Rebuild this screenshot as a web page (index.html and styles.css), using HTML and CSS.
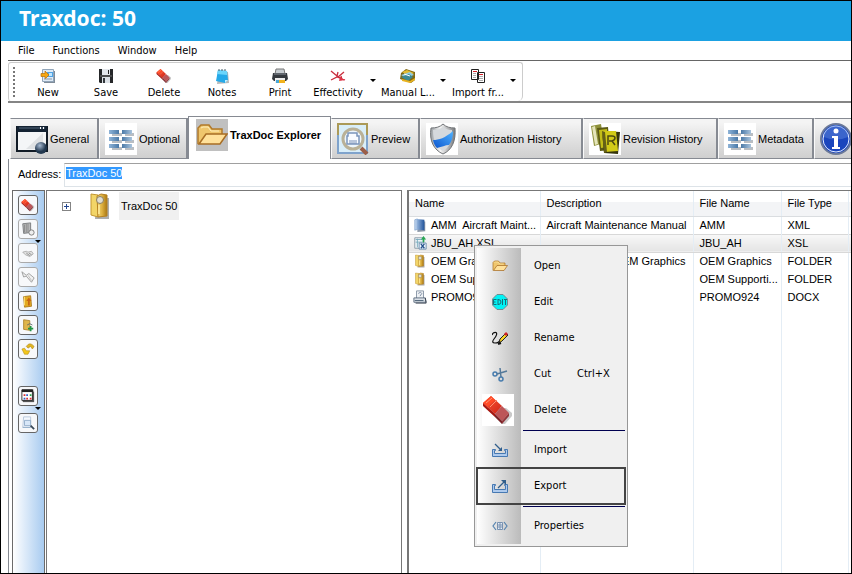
FILE: index.html
```html
<!DOCTYPE html>
<html lang="en">
<head>
<meta charset="utf-8">
<title>Traxdoc: 50</title>
<link rel="stylesheet" href="styles.css">
</head>
<body>
<svg class="defs" aria-hidden="true">
  <defs>
    <linearGradient id="g-steel" x1="0" x2="1"><stop offset="0" stop-color="#8fb4d8"/><stop offset=".5" stop-color="#3e6f9f"/><stop offset="1" stop-color="#a9c4dd"/></linearGradient>
    <linearGradient id="g-gold" x1="0" x2="1"><stop offset="0" stop-color="#f3dc80"/><stop offset=".5" stop-color="#dfb140"/><stop offset="1" stop-color="#a97812"/></linearGradient>
    <linearGradient id="g-ribbon" x1="0" y1="1" x2="1" y2="0"><stop offset="0" stop-color="#0b56cf"/><stop offset="1" stop-color="#4fb2ff"/></linearGradient>
    <linearGradient id="g-shield" x1="0" x2="1"><stop offset="0" stop-color="#9a9fa3"/><stop offset=".4" stop-color="#f4f4f4"/><stop offset="1" stop-color="#77797c"/></linearGradient>
    <linearGradient id="g-red" x1="0" y1="0" x2="1" y2="1"><stop offset="0" stop-color="#ff5a35"/><stop offset="1" stop-color="#cf2418"/></linearGradient>
    <linearGradient id="g-book" x1="0" x2="1"><stop offset="0" stop-color="#9ab9e0"/><stop offset="1" stop-color="#21549b"/></linearGradient>
    <radialGradient id="g-ball" cx=".4" cy=".3"><stop offset="0" stop-color="#a8bbd2"/><stop offset="1" stop-color="#22384f"/></radialGradient>
  </defs>
  <symbol id="i-eraser" viewBox="0 0 32 32">
    <path d="M4 14l16 16h3l7-8v-3l-6-5z" fill="#888" opacity=".45"/>
    <path d="M1 9l8-7 11 10-7 8z" fill="url(#g-red)"/><path d="M1 9l8-7 4 4-8 7z" fill="#ff4a26"/>
    <path d="M1 9v3l12 11v-3z" fill="#a81710"/><path d="M13 20l7-8 7 7-7 8z" fill="#bd5658"/><path d="M13 20v3l7 7v-3z" fill="#7d2327"/><path d="M20 27l7-8v3l-7 8z" fill="#92363a"/>
    <path d="M4 9l6-5M8 13l7-7" stroke="#ff9374" fill="none"/>
  </symbol>
  <symbol id="i-new" viewBox="0 0 16 16"><path d="M4 3h11v12H4z" fill="#7f8c99"/><path d="M2.500 1.500h11v12h-11z" fill="#dfeaf5" stroke="#91a5b9"/><path d="M7 4h6v5H7z" fill="#4fa4e5"/><path d="M9 5h3v3H9z" fill="#bfe5ff"/><path d="M1 5.500h4V3l4 4-4 4V8.500H1z" fill="#f6a712" stroke="#b86f08" stroke-width=".7"/><path d="M4 11h8" stroke="#8799aa"/></symbol>
  <symbol id="i-save" viewBox="0 0 16 16"><path d="M1 1h14v14H2l-1-1z" fill="#252729"/><path d="M4 1h8v6H4z" fill="#e4e8ed"/><path d="M10 2h1v4h-1z" fill="#222"/><path d="M4 9h8v6H4z" fill="#dce1e6"/><path d="M5 10h2v5H5z" fill="#33383d"/><path d="M2 8h12" stroke="#777"/></symbol>
  <symbol id="i-note" viewBox="0 0 16 16"><path d="M5 3l9 1 1 11-12 1z" fill="#888" opacity=".6"/><path d="M4 2l9 1 1 9-3 3-9-2z" fill="#25a9e8"/><path d="M4 2l9 1v4L3 6z" fill="#6bd5fb"/><path d="M11 15v-3h3z" fill="#c2efff"/><path d="M5 1v2M8 1v2M11 1v2" stroke="#465c68"/></symbol>
  <symbol id="i-print" viewBox="0 0 16 16"><path d="M4 1h8l1 5H3z" fill="#c7ccd1" stroke="#777"/><path d="M1 5h14l1 6-2 2H2l-2-2z" fill="#34383e"/><path d="M2 6h12" stroke="#8b929b"/><path d="M3 10h10v5H3z" fill="#eee"/><path d="M4 12h3v3H4z" fill="#46a7da"/><path d="M7 12h6v3H7z" fill="#f2b31d"/></symbol>
  <symbol id="i-effect" viewBox="0 0 16 16"><g fill="none" stroke="#c92d3d" stroke-width="1.300"><path d="M1 3l6 5 7 4M7 8l1-4M8 9l6-5M1 12l6-3 8 3M11 8l1 4"/></g><path d="M10 9l5 3-6 1z" fill="#df3547"/></symbol>
  <symbol id="i-manual" viewBox="0 0 16 16"><path d="M1 5l5-4 9 3v8l-4 3-11-4z" fill="#806813"/><path d="M2 4l5-2 7 3-5 3z" fill="#e4bd32"/><path d="M1 7l9-3 4 3-8 3z" fill="#91cae0"/><path d="M1 9l8-3 4 3-5 4z" fill="#3d8a94"/><path d="M2 11l8 2 5-3v2l-5 3-8-2z" fill="#e8b320"/><path d="M4 6l6 2" stroke="#fff"/></symbol>
  <symbol id="i-import-from" viewBox="0 0 16 16"><path d="M1.500 1.500h7v10h-7zM7.500 4.500h7v10h-7z" fill="#fff" stroke="#202020"/><path d="M3 3.500h4M9 6.500h4" stroke="#d51e26"/><path d="M3 5.500h3M3 7.500h3M3 9.500h3M9 8.500h4M9 10.500h4M9 12.500h4" stroke="#aaa"/></symbol>
  <symbol id="i-window" viewBox="0 0 32 32"><path d="M1 4h30v24H1z" fill="#f4f6f7" stroke="#111b26" stroke-width="2"/><path d="M1 3h30v6H1z" fill="#142333"/><path d="M3 5h26" stroke="#53667a"/><path d="M24 5h1m2 0h1" stroke="#fff" stroke-width="2"/><path d="M10 26L27 10v16z" fill="#dfe2e4"/><circle cx="25" cy="25" r="6" fill="url(#g-ball)"/></symbol>
  <symbol id="i-grid" viewBox="0 0 32 32"><path d="M0 0h32v32H0z" fill="#fff"/><path d="M7 10h10v3H7zm13 0h9v3h-9zM7 17h10v3H7zm13 0h9v3h-9zM7 24h10v3H7zm13 0h9v3h-9z" fill="#b9bec3"/><path d="M4 7h10v4H4zm13 0h10v4H17zM4 14h10v4H4zm13 0h10v4H17zM4 21h10v4H4zm13 0h10v4H17z" fill="url(#g-steel)"/></symbol>
  <symbol id="i-folder" viewBox="0 0 32 32"><path d="M2 25V9l3-3h8l3 4h10v6" fill="#efc66d" stroke="#b1792a" stroke-width="1.500"/><path d="M3 25l7-10h21l-7 10z" fill="#ffe19b" stroke="#a86e25" stroke-width="1.500"/><path d="M5 9l2-1h5l3 4h8" fill="none" stroke="#fff0bc"/></symbol>
  <symbol id="i-preview" viewBox="0 0 32 32"><path d="M1 1h29v29H1z" fill="#d9eef9"/><path d="M1 12V1h29v11" fill="none" stroke="#ab9a58" stroke-width="2"/><path d="M1 12v18h29V12" fill="none" stroke="#7fa3cc" stroke-width="2"/><path d="M24 25l6 6" stroke="#9b5e48" stroke-width="4"/><circle cx="16" cy="16" r="10" fill="#edf6fc" stroke="#b9b197" stroke-width="3"/><path d="M11 13v-3h9v3h2v8H10v-8z" fill="#f9fcff" stroke="#7b95bb" stroke-width="1.500"/><path d="M12 18h8M12 20h8" stroke="#7690b8"/></symbol>
  <symbol id="i-shield" viewBox="0 0 32 32"><path d="M0 0h32v32H0z" fill="#fff"/><path d="M17 1c3 3 7 4 12 4 1 13-3 22-12 26C8 27 3 18 5 5c5 0 9-1 12-4z" fill="url(#g-shield)" stroke="#717477"/><path d="M17 4c3 2 5 3 9 3 0 11-3 18-9 21C11 25 7 18 7 7c4 0 7-1 10-3z" fill="#d5d9dd"/><path d="M7 17c6 0 12-2 20-9 0 6-1 10-4 14-4 0-7 2-12 3-2-2-3-4-4-8z" fill="url(#g-ribbon)"/></symbol>
  <symbol id="i-revision" viewBox="0 0 32 32"><path d="M0 0h32v32H0z" fill="#fff"/><path d="M2 3l10-2 3 19-10 3z" fill="#8e913a"/><path d="M3 4l3-1 3 18-3 1z" fill="#e5e5bb"/><path d="M8 5l11-1 2 23-10 1z" fill="#5b5915"/><path d="M10 7l8-1v18l-6 1z" fill="#c3bd18"/><path d="M13 8l2 22 14 1 2-22z" fill="#35340c"/><path d="M13 8h14l2 20-13 1z" fill="#d2ca18"/><path d="M13 8l3 1 2 20-3 1z" fill="#666117"/><path d="M19 22V13h4q3 0 3 2t-3 3h-3m3 0l3 4" stroke="#4d4911" stroke-width="1.500" fill="none"/></symbol>
  <symbol id="i-info" viewBox="0 0 32 32"><circle cx="16" cy="16" r="15" fill="#1a45bd" stroke="#6a7898" stroke-width="2"/><circle cx="16" cy="16" r="13" fill="none" stroke="#e5edff"/><path d="M4 14a12 12 0 0 1 24 0q-12 5-24 0" fill="#5b85dc" opacity=".5"/><circle cx="16" cy="8" r="2.500" fill="#fff"/><path d="M12 13h6v11h2v2h-8v-2h2v-9h-2z" fill="#fff"/></symbol>
  <symbol id="i-binder" viewBox="0 0 24 28"><path d="M8 6h13v21H7z" fill="#777" opacity=".6"/><path d="M3 2l7 1v22l-7-2z" fill="#f2d568" stroke="#c39733"/><path d="M9 4l4-2 6 1v21l-9 1z" fill="url(#g-gold)" stroke="#b68120"/><circle cx="12" cy="8" r="3.500" fill="#e1ddd0" stroke="#8b8061"/><path d="M11 13v9" stroke="#f9e28e" stroke-width="2"/></symbol>
  <symbol id="i-book" viewBox="0 0 16 16"><path d="M5 3l9 1v11l-9 1z" fill="#8c98a8"/><path d="M2 2l3-1v12l-3 1z" fill="#bcd1ec" stroke="#628bbf" stroke-width=".6"/><path d="M4 1l9 1v12l-9-1z" fill="url(#g-book)"/></symbol>
  <symbol id="i-xsl" viewBox="0 0 16 16"><path d="M2 2h10v12H2z" fill="#edf3f6" stroke="#8798a4"/><path d="M3 4h8M3 7h8M5 3v10" stroke="#75a9bc"/><path d="M7 8h8v7H7z" fill="#eff8ff" stroke="#6286a8"/><path d="M9 9l4 5m0-5l-4 5" stroke="#26518a" stroke-width="1.500"/><path d="M12 0l3 4h-2v3h-2V4H9z" fill="#28a653"/></symbol>
  <symbol id="i-doc" viewBox="0 0 16 16"><path d="M4 1h8v10H4z" fill="#eef1f4" stroke="#8290a0"/><path d="M6 4q3-3 4 0L8 7" fill="none" stroke="#73839b"/><path d="M1 9h13l1 5H1z" fill="#d9dfe6" stroke="#58697b"/><path d="M2 12h10" stroke="#465b70"/><path d="M14 9l1 6H3" fill="none" stroke="#343d49"/></symbol>
  <symbol id="i-gray-book" viewBox="0 0 16 16"><path d="M2 2l9-1v11l-8 1z" fill="#b9babb" stroke="#747678"/><path d="M4 3v9M6 2v10M8 2v10" stroke="#888"/><circle cx="12" cy="12" r="3" fill="#eee" stroke="#777"/></symbol>
  <symbol id="i-gray-hand" viewBox="0 0 16 16"><path d="M2 7l4-1 2 1 4-1 2 3-4 3-5-2z" fill="#e2e2e2" stroke="#aaa"/><path d="M6 8l4 3M9 8l3 2" stroke="#888"/></symbol>
  <symbol id="i-gray-tag" viewBox="0 0 16 16"><path d="M1 2l2 6 3-1 6 7 3-5-6-5-3 2z" fill="#f0f0f0" stroke="#999"/><path d="M8 6l4 6" stroke="#bbb"/></symbol>
  <symbol id="i-arrow-binder" viewBox="0 0 16 16"><path d="M3 3l8-1 1 12-8 1z" fill="#e3aa22" stroke="#aa791b"/><path d="M4 3v10" stroke="#ffe57e"/><path d="M8 13V8H6l3-4 3 4h-2v5z" fill="#c76613"/></symbol>
  <symbol id="i-add-binder" viewBox="0 0 16 16"><path d="M3 2l7 1v11l-7-1z" fill="#dfb54a" stroke="#af852b"/><path d="M11 9v6m-3-3h6" stroke="#239445" stroke-width="2"/><path d="M7 8q3-3 6 0" fill="none" stroke="#5a6670"/></symbol>
  <symbol id="i-refresh" viewBox="0 0 16 16"><path d="M6 5q4-6 9 0l-2 3-2-3-3 2z" fill="#e0b623" stroke="#aa7e11" stroke-width=".6"/><path d="M1 8l3-1 2 3h4l-2 4H4z" fill="#f3c71c" stroke="#af8510" stroke-width=".6"/></symbol>
  <symbol id="i-calendar" viewBox="0 0 16 16"><path d="M2 3h13v12H2z" fill="#555"/><path d="M1 1h12v12H1z" fill="#fff" stroke="#222"/><path d="M1 2h13" stroke="#222" stroke-width="3"/><path d="M3 6h2v2H3zm3 4h2v2H6zm4 0h2v2h-2z" fill="#e02b31"/><path d="M6 6h2v2H6zm-3 4h2v2H3z" fill="#315dcc"/><path d="M10 6h2v2h-2z" fill="#29a34b"/></symbol>
  <symbol id="i-find" viewBox="0 0 16 16"><path d="M3 1h8v12H2z" fill="#f4f8fd" stroke="#b4c5da"/><path d="M4 5h7v6H4z" fill="#d8e7f8" stroke="#8ea9c6"/><path d="M2 13h9" stroke="#8ea9c6"/><path d="M11 11l4 4" stroke="#384858" stroke-width="2"/></symbol>
  <symbol id="i-edit" viewBox="0 0 16 16"><path d="M5 .5h6L15.500 5v6L11 15.500H5L.5 11V5z" fill="#00f3f5" stroke="#708b91"/><path d="M4.500 5.500h-3v5h3M1.500 8h2M6 5v6M6 5.500q3 0 3 2.500t-3 2.500M10.500 5v6M12 5.500h3M13.500 5v6" fill="none" stroke="#177079"/></symbol>
  <symbol id="i-rename" viewBox="0 0 16 16"><path d="M0 5q1-3 4-2.500Q6 4 2 9q-3 4 1 4 4 0 5-3" fill="none" stroke="#111" stroke-width="1.200"/><path d="M7 13l1-4 6-6 2 2-6 6z" fill="#f8d326" stroke="#222"/><path d="M13 3l2 2" stroke="#d02027" stroke-width="3"/><path d="M6 14l3-1" stroke="#111" stroke-width="2"/></symbol>
  <symbol id="i-cut" viewBox="0 0 16 16"><circle cx="3" cy="8" r="2" fill="none" stroke="#477cad" stroke-width="1.500"/><circle cx="9" cy="13" r="2" fill="none" stroke="#477cad" stroke-width="1.500"/><path d="M5 8l10-3M9 11l-1-9" stroke="#54799a" stroke-width="1.500"/></symbol>
  <symbol id="i-import" viewBox="0 0 16 16"><path d="M.5 7.500h3v1h-1v3h11v-3h-1v-1h3v7H.5z" fill="#aecaed" stroke="#4779b2"/><path d="M3 2l6 6" stroke="#315e8b" stroke-width="1.200"/><path d="M10 5v4H6z" fill="#315e8b"/></symbol>
  <symbol id="i-export" viewBox="0 0 16 16"><path d="M.5 6.500h3v1h-1v4h11v-4h-1v-1h3v8H.5z" fill="#aecaed" stroke="#4779b2"/><path d="M6 10l7-7" stroke="#315e8b" stroke-width="1.200"/><path d="M9 2h5v5z" fill="#315e8b"/></symbol>
  <symbol id="i-props" viewBox="0 0 16 16"><path d="M4 4L1 8l3 4M12 4l3 4-3 4" fill="none" stroke="#5684b0" stroke-width="1.200"/><path d="M5.500 4.500h5v7h-5zM5 7h6M5 9h6M8 5v6" fill="#e4edf7" stroke="#7891b0"/></symbol>
</svg>

<div class="app">
  <header class="title-bar"><h1>Traxdoc: 50</h1></header>
  <nav class="menu-bar" aria-label="Main">
    <button>File</button><button>Functions</button><button>Window</button><button>Help</button>
  </nav>
  <div class="toolbar-row">
    <div class="toolbar" role="toolbar">
      <span class="grip"></span>
      <button class="tool"><svg><use href="#i-new"/></svg>New</button>
      <button class="tool"><svg><use href="#i-save"/></svg>Save</button>
      <button class="tool"><svg><use href="#i-eraser"/></svg>Delete</button>
      <button class="tool"><svg><use href="#i-note"/></svg>Notes</button>
      <button class="tool"><svg><use href="#i-print"/></svg>Print</button>
      <button class="tool"><svg><use href="#i-effect"/></svg>Effectivity</button>
      <button class="drop" aria-label="Effectivity options"></button>
      <button class="tool"><svg><use href="#i-manual"/></svg>Manual L...</button>
      <button class="drop" aria-label="Manual options"></button>
      <button class="tool"><svg><use href="#i-import-from"/></svg>Import fr...</button>
      <button class="drop" aria-label="Import options"></button>
    </div>
  </div>

  <div class="tabs" role="tablist">
    <button class="tab" role="tab"><svg><use href="#i-window"/></svg>General</button>
    <button class="tab" role="tab"><svg><use href="#i-grid"/></svg>Optional</button>
    <button class="tab active" role="tab" aria-selected="true"><svg><use href="#i-folder"/></svg>TraxDoc Explorer</button>
    <button class="tab" role="tab"><svg><use href="#i-preview"/></svg>Preview</button>
    <button class="tab wide" role="tab"><svg><use href="#i-shield"/></svg>Authorization History</button>
    <button class="tab medium" role="tab"><svg><use href="#i-revision"/></svg>Revision History</button>
    <button class="tab" role="tab"><svg><use href="#i-grid"/></svg>Metadata</button>
    <button class="tab" role="tab" aria-label="Information"><svg><use href="#i-info"/></svg></button>
  </div>

  <main class="panel">
    <div class="address">
      <label for="address">Address:</label>
      <input id="address" type="text" value="TraxDoc 50" autocomplete="off" spellcheck="false">
    </div>
    <div class="panes">
      <aside class="side">
        <button aria-label="Delete"><svg><use href="#i-eraser"/></svg></button>
        <button class="off more" aria-label="New document"><svg><use href="#i-gray-book"/></svg></button>
        <button class="off" aria-label="Assign"><svg><use href="#i-gray-hand"/></svg></button>
        <button class="off" aria-label="Tag"><svg><use href="#i-gray-tag"/></svg></button>
        <button aria-label="Move up"><svg><use href="#i-arrow-binder"/></svg></button>
        <button aria-label="Add binder"><svg><use href="#i-add-binder"/></svg></button>
        <button aria-label="Refresh"><svg><use href="#i-refresh"/></svg></button>
        <button class="more apart" aria-label="View"><svg><use href="#i-calendar"/></svg></button>
        <button class="last" aria-label="Find"><svg><use href="#i-find"/></svg></button>
      </aside>
      <section class="tree">
        <div class="node">
          <button class="expand" aria-label="Expand"></button>
          <svg><use href="#i-binder"/></svg>
          <span>TraxDoc 50</span>
        </div>
      </section>
      <section class="list">
        <table>
          <colgroup><col class="c-name"><col class="c-desc"><col class="c-file"><col class="c-type"><col></colgroup>
          <thead><tr><th>Name</th><th>Description</th><th>File Name</th><th>File Type</th><th></th></tr></thead>
          <tbody>
            <tr><td><svg><use href="#i-book"/></svg>AMM&nbsp; Aircraft Maint...</td><td>Aircraft Maintenance Manual</td><td>AMM</td><td>XML</td><td></td></tr>
            <tr class="selected"><td><svg><use href="#i-xsl"/></svg>JBU_AH.XSL</td><td></td><td>JBU_AH</td><td>XSL</td><td></td></tr>
            <tr><td><svg><use href="#i-binder"/></svg>OEM Graphics</td><td class="end">OEM Graphics</td><td>OEM Graphics</td><td>FOLDER</td><td></td></tr>
            <tr><td><svg><use href="#i-binder"/></svg>OEM Supporti...</td><td></td><td>OEM Supporti...</td><td>FOLDER</td><td></td></tr>
            <tr><td><svg><use href="#i-doc"/></svg>PROMO924</td><td></td><td>PROMO924</td><td>DOCX</td><td></td></tr>
            <tr class="rest"><td></td><td></td><td></td><td></td><td></td></tr>
          </tbody>
        </table>
        <div class="context" role="menu">
          <button role="menuitem"><svg><use href="#i-folder"/></svg><span>Open</span></button>
          <button role="menuitem"><svg><use href="#i-edit"/></svg><span>Edit</span></button>
          <button role="menuitem"><svg><use href="#i-rename"/></svg><span>Rename</span></button>
          <button role="menuitem"><svg><use href="#i-cut"/></svg><span>Cut</span><kbd>Ctrl+X</kbd></button>
          <button role="menuitem"><svg class="big"><use href="#i-eraser"/></svg><span>Delete</span></button>
          <hr>
          <button role="menuitem"><svg><use href="#i-import"/></svg><span>Import</span></button>
          <button role="menuitem" class="boxed"><svg><use href="#i-export"/></svg><span>Export</span></button>
          <hr>
          <button role="menuitem"><svg><use href="#i-props"/></svg><span>Properties</span></button>
        </div>
      </section>
    </div>
  </main>
</div>
<script src="app.js"></script>
</body>
</html>
```
FILE: styles.css
```css
* { box-sizing: border-box; }
body {
  margin: 0;
  color: #000;
  background: #fff;
  font: 11px/14px "Liberation Sans", Arial, sans-serif;
}
button {
  margin: 0;
  padding: 0;
  border: 0;
  background: none;
  color: inherit;
  font: inherit;
}
svg { display: block; flex: none; width: 16px; height: 16px; }
.defs { position: absolute; width: 0; height: 0; }

.app {
  display: flex;
  flex-direction: column;
  height: 100vh;
  border: 1px solid #000;
  overflow: hidden;
}
.title-bar {
  flex: none;
  display: flex;
  align-items: center;
  height: 40px;
  padding: 0 18px 6px;
  background: #1ba1e2;
  color: #fff;
}
.title-bar h1 { margin: 0; font: bold 21px/28px "Noto Sans", Tahoma, sans-serif; }

.menu-bar, .toolbar, .context { font-family: "DejaVu Sans Condensed", Tahoma, "Noto Sans", sans-serif; }
.menu-bar {
  flex: none;
  display: flex;
  gap: 18px;
  height: 20px;
  margin-left: 7px;
  padding-left: 10px;
  border-bottom: 1px solid #666;
}
.toolbar-row {
  flex: none;
  display: flex;
  height: 42px;
  margin-left: 7px;
  padding-top: 1px;
  border-bottom: 2px solid #858585;
}
.toolbar {
  display: flex;
  padding-right: 3px;
  border: 1px solid #ccc;
  border-bottom: 0;
  border-radius: 3px 3px 5px 3px;
}
.grip {
  width: 2px;
  margin: 4px 4px 2px;
  background: repeating-linear-gradient(#777 0 2px, transparent 2px 4px);
}
.tool {
  display: flex;
  flex-direction: column;
  align-items: center;
  gap: 2px;
  width: 58px;
  padding-top: 5px;
  white-space: nowrap;
}
.drop {
  display: flex;
  justify-content: center;
  width: 12px;
  padding-top: 16px;
}
.drop::before, .more::after {
  content: "";
  border: 3px solid transparent;
  border-top-color: #000;
  border-bottom: 0;
}

.tabs {
  flex: none;
  display: flex;
  align-items: flex-end;
  height: 56px;
  margin-left: 7px;
  padding-left: 2px;
}
.tab {
  flex: none;
  display: flex;
  align-items: center;
  gap: 2px;
  height: 41px;
  min-width: 89px;
  padding: 0 5px;
  border: 1px solid #868a92;
  border-left-color: #fafafa;
  border-right-width: 2px;
  background: linear-gradient(#f4f4f4 0 10%, #e2e2e2 50%, #cfcfcf);
  white-space: nowrap;
}
.tab svg { width: 32px; height: 32px; }
.tab.wide { min-width: 163px; }
.tab.medium { min-width: 135px; }
.tab.medium + .tab { min-width: 96px; }
.tab.active {
  height: 43px;
  min-width: 143px;
  padding: 0 6px 6px 7px;
  border: 1px solid #868a92;
  border-bottom: 0;
  background: #fff;
  font-weight: bold;
}
.tab.active svg { background: #c0c0c0; }

.panel {
  flex: 1;
  display: flex;
  flex-direction: column;
  min-height: 0;
  margin-left: 7px;
  border-left: 1px solid #868a92;
}
.address {
  flex: none;
  display: flex;
  height: 28px;
  padding: 4px 0 0 9px;
}
.address label { width: 46px; padding-top: 4px; }
.address input {
  flex: 1;
  min-width: 0;
  height: 24px;
  padding: 0 1px 4px;
  border: 1px solid #dde3e8;
  border-top-color: #a0a0a0;
  border-right: 0;
  outline: 0;
  background: #fff;
  color: #000;
  font: inherit;
}
.address input::selection { background: #3399ff; color: #fff; }

.panes { flex: 1; display: flex; min-height: 0; padding: 3px 0 0 3px; }
.side {
  flex: none;
  display: flex;
  flex-direction: column;
  align-items: center;
  gap: 4px;
  width: 33px;
  margin-right: 1px;
  padding: 4px 2px 0 0;
  border: 1px solid #6b6b6b;
  border-bottom: 0;
  background: linear-gradient(90deg, #fff, #a8cbf0);
}
.side button {
  position: relative;
  display: grid;
  place-items: center;
  width: 20px;
  height: 20px;
  border: 1px solid #666;
  border-radius: 3px;
  background: #f7f8fa;
}
.side svg { width: 14px; height: 14px; }
.side .off { border-color: #aaa; }
.side .apart { margin-top: 23px; }
.side .last { margin-top: 3px; }
.more::after { position: absolute; right: -4px; bottom: -5px; }

.tree {
  flex: 0 0 356px;
  border: 1px solid #777;
  border-bottom: 0;
}
.node { display: flex; align-items: center; padding: 1px 0 0 15px; }
.node svg { width: 24px; height: 28px; margin: 0 7px 0 17px; }
.node span { padding: 7px 2px; background: #f0f0f0; }
.expand {
  width: 9px;
  height: 9px;
  border: 1px solid #848484;
  background:
    linear-gradient(#24478f, #24478f) center / 5px 1px no-repeat,
    linear-gradient(#24478f, #24478f) center / 1px 5px no-repeat;
}

.list {
  position: relative;
  flex: 1;
  min-width: 0;
  margin-left: 5px;
  border: 1px solid #777;
  border-width: 1px 0 0 2px;
}
table { width: 100%; height: 100%; border-collapse: collapse; table-layout: fixed; }
.c-name { width: 131px; }
.c-desc { width: 153px; }
.c-file { width: 88px; }
.c-type { width: 67px; }
th, td {
  height: 18px;
  padding: 0 0 0 6px;
  border-right: 1px solid #e4edf5;
  text-align: left;
  font-weight: normal;
  white-space: nowrap;
  overflow: hidden;
}
th { height: 25px; border-bottom: 1px solid #dadde0; background: linear-gradient(#fff 45%, #f3f4f6 46%); }
th:last-child, td:last-child { border-right: 0; }
td svg { float: left; width: 14px; height: 14px; margin-right: 4px; }
td:first-child { padding-left: 4px; }
td.end { padding-right: 7px; text-align: right; }
.selected td { background: linear-gradient(#f8f8f8, #e4e4e4); border-block: 1px solid #d8d8d8; }
.rest td { height: auto; }

.context {
  position: absolute;
  left: 65px;
  top: 54px;
  width: 154px;
  padding: 2px;
  border: 1px solid #979797;
  background: linear-gradient(90deg, #fff, #bbb) 2px 2px / 44px calc(100% - 4px) no-repeat #f0f0f0;
}
.context button {
  display: flex;
  align-items: center;
  width: 100%;
  height: 36px;
  padding-left: 15px;
}
.context svg { margin-right: 26px; }
.context svg.big { width: 32px; height: 32px; margin: 0 20px 0 -10px; background: #fff; }
.context kbd { margin-left: 26px; font: inherit; }
.context hr {
  height: 4px;
  margin: 0 0 0 46px;
  border: 0;
  background: linear-gradient(#000050, #000050) center / 100% 1px no-repeat;
}
.context .boxed { outline: 2px solid #444; outline-offset: -1px; }
```
FILE: app.js
```js
const address = document.getElementById("address");
address.focus();
address.select();
```
